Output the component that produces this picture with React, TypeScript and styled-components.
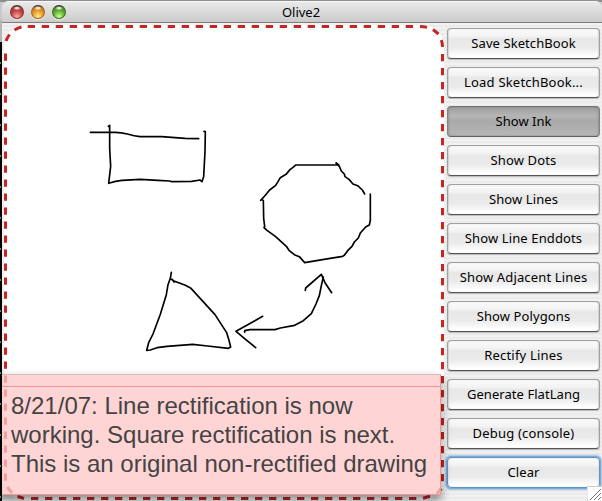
import React from "react";
import styled, { createGlobalStyle, css } from "styled-components";

const GlobalStyle = createGlobalStyle`
  html, body { margin: 0; padding: 0; overflow: hidden; background: #b4b4b4; }
  *, *::before, *::after { box-sizing: border-box; }
`;

const Desktop = styled.div`
  width: 602px;
  height: 501px;
  padding: 1px 0 0 2px;
  overflow: hidden;
  background:
    repeating-linear-gradient(180deg, transparent 0 13px, #5f9a62 13px 15px, transparent 15px 31px) 0 49px / 1px 460px no-repeat,
    linear-gradient(180deg, #8f8f8f 0 2px, #c9c9c9 2px 20px, #b5b5b5 20px 42px, #000 42px);
`;

const Window = styled.div`
  width: 600px;
  height: 500px;
  display: flex;
  flex-direction: column;
  border-radius: 7px 7px 0 0;
  overflow: hidden;
  background: repeating-linear-gradient(180deg, #ebebeb 0 2px, #f1f1f1 2px 4px);
`;

const TitleBar = styled.header`
  flex: none;
  height: 22px;
  display: grid;
  grid-template-columns: 75px 1fr 77px;
  align-items: center;
  border-top: 1px solid #f7f7f7;
  border-bottom: 1px solid #7e7e7e;
  background: linear-gradient(180deg, #e9e9e9, #cbcbcb);
`;

const Lights = styled.div`
  display: flex;
  gap: 7px;
  padding-left: 8px;
`;

const Light = styled.span<{ $edge: string; $mid: string; $glow: string }>`
  width: 14px;
  height: 14px;
  border-radius: 50%;
  border: 1px solid ${(p) => p.$edge};
  border-top-color: #3d3432;
  background:
    radial-gradient(ellipse 4px 2px at 50% 18%, #ffffffd0 0 30%, transparent 100%),
    radial-gradient(ellipse 8px 9px at 50% 90%, ${(p) => p.$glow} 0, ${(p) => p.$mid} 65%, ${(p) => p.$edge} 125%);
  box-shadow: 0 1px 1px #ffffffb0;
`;

const Title = styled.h1`
  margin: 0;
  text-align: center;
  font: 400 13px/18px "Noto Sans", sans-serif;
  color: #000;
`;

const Content = styled.div`
  flex: 1;
  min-height: 0;
  display: grid;
  grid-template-columns: 442px 158px;
`;

const SketchArea = styled.main`
  position: relative;
`;

const Drawing = styled.svg`
  display: block;
  width: 442px;
  height: 478px;
`;

const Note = styled.aside`
  position: absolute;
  left: 0;
  top: 351px;
  width: 439px;
  height: 121px;
  border: 1px solid #ec9999;
  border-left: 0;
  border-top-color: #d0bfbf;
  background: rgba(255, 198, 198, 0.76);
`;

const NoteShadow = styled.div`
  position: absolute;
  left: -4px;
  top: 351px;
  width: 443px;
  height: 121px;
  box-shadow: 0 5px 9px rgba(0, 0, 0, 0.48);
  clip-path: polygon(0 -10px, 460px -10px, 460px 140px, 0 140px, 0 121px, 443px 121px, 443px 0, 0 0);
`;

const NoteHandle = styled.div`
  height: 12px;
  border-bottom: 1px solid #ec9494;
`;

const NoteText = styled.p`
  margin: 4px 0 0 9px;
  font: 400 24px/29px "Liberation Sans", Arial, sans-serif;
  color: #444;
  white-space: pre;
`;

const NoteLine = styled.span`
  display: block;
`;

const Controls = styled.nav`
  display: flex;
  flex-direction: column;
  gap: 8px;
  padding: 5px 2px 0 3px;
`;

const pressed = css`
  background: linear-gradient(180deg, #9d9d9d 0, #b5b5b5 30%, #a9a9a9 50%, #b6b6b6 100%);
  border-color: #747474 #828282 #606060;
  box-shadow: inset 1px 0 2px #7777, inset -1px 0 2px #7777;
`;

const focused = css`
  border-color: #6792bd;
  box-shadow: 0 0 0 1px #7daad6, 0 0 2px 2px #9bbfe2, inset 0 0 1px #6b9dcc;
`;

const Button = styled.button<{ $state?: "pressed" | "focused"; $spacing: number }>`
  flex: none;
  width: 153px;
  height: 31px;
  margin: 0;
  padding: 0 0 2px;
  border: 1px solid #a0a0a0;
  border-bottom-color: #555;
  border-radius: 4px;
  background: linear-gradient(180deg, #fafafa 0, #f3f3f3 25%, #e7e7e7 34%, #ebebeb 65%, #ffffff 94%);
  box-shadow: 0 1px 1px #8888, inset 1px 0 1px #bbb8, inset -1px 0 1px #bbb8;
  font: 400 13px/18px "Noto Sans", sans-serif;
  letter-spacing: ${(p) => p.$spacing}px;
  color: #000;
  white-space: nowrap;
  ${(p) => p.$state === "pressed" && pressed}
  ${(p) => p.$state === "focused" && focused}
`;

const ResizeGrip = styled.svg`
  position: absolute;
  left: 587px;
  top: 486px;
  width: 15px;
  height: 15px;
`;

const actions: { label: string; spacing: number; state?: "pressed" | "focused" }[] = [
  { label: "Save SketchBook", spacing: 0.07 },
  { label: "Load SketchBook...", spacing: 0.2 },
  { label: "Show Ink", spacing: 0, state: "pressed" },
  { label: "Show Dots", spacing: 0.15 },
  { label: "Show Lines", spacing: 0.1 },
  { label: "Show Line Enddots", spacing: 0.12 },
  { label: "Show Adjacent Lines", spacing: 0.15 },
  { label: "Show Polygons", spacing: 0.1 },
  { label: "Rectify Lines", spacing: 0.2 },
  { label: "Generate FlatLang", spacing: 0.06 },
  { label: "Debug (console)", spacing: 0.2 },
  { label: "Clear", spacing: 0.1, state: "focused" },
];

function Sketch() {
  return (
    <Drawing viewBox="2 23 442 478" fill="none">
      <rect x="4" y="25" width="440" height="475" rx="21" fill="#fff" />
      <g stroke="#c52525" strokeWidth="3">
        <path d="M27.7 26.5H414" strokeDasharray="7.3 6.7" />
        <path d="M5.5 53.4V484" strokeDasharray="7.3 6.7" />
        <path d="M442.5 54V484" strokeDasharray="7.3 6.7" />
        <path d="M31 498.5H419" strokeDasharray="7.3 6.7" />
        <path d="M6 41Q7 38 9.5 34.5M14.5 30Q18 27.8 21.5 27M420 26.5Q424 26.5 427 27.4M433 29.5L438.5 34M441.3 40Q442.5 43 442.5 47M7.2 487L12 493M17.5 496.5L24 498.5M437 494L441 488.5M423 498.3L430 496.3" />
      </g>
      <g stroke="#000" strokeWidth="5" strokeLinecap="round" strokeLinejoin="round">
        <g transform="translate(80 115) scale(.33333)">
          <path d="M31 52H106Q124 53 142 57Q164 63 180 65H245L315 70L356 71" />
          <path d="M85 34L89 31V101L92 154L86 205Q107 198 126 196L181 193L234 196L269 198L275 200L335 199L360 195L366 200L371 185L375 110L376 50L372 49" />
        </g>
        <g transform="translate(250 150) scale(.33333)">
          <path d="M258 39L266 45H137L132 50L120 59L108 73L91 83L84 95L77 106L59 120L44 138L32 151L36 147L40 152L41 205L44 229L42 233L51 241L77 260L109 289L117 301L133 314L148 320L164 338L222 328L278 319L283 316L293 302L306 289L313 276L325 264L331 249L347 231L358 225L361 211V132" />
          <path d="M260 40L268 49L274 63L283 72L285 80L297 88L309 102L323 107L337 120L344 132" />
        </g>
        <g transform="translate(135 260) scale(.33333)">
          <path d="M109 37L106 55L99 74L94 104L76 163L54 222L41 248L35 271L46 270L66 263L96 259L173 253L218 258L280 265L287 261L282 241L275 218L240 164L168 85L151 76L117 63L106 56M112 58L117 66" />
        </g>
        <g transform="translate(225 260) scale(.33333)">
          <path d="M59 217V212L75 209H150L166 204L209 196L235 182L259 161L273 132L283 107L289 77L295 51" />
          <path d="M113 169L87 184L33 214L58 235L92 263" />
          <path d="M241 91L242 84L289 43L300 68L320 98" />
        </g>
      </g>
    </Drawing>
  );
}

export default function App() {
  return (
    <Desktop>
      <GlobalStyle />
      <Window>
        <TitleBar>
          <Lights>
            <Light $edge="#87302e" $mid="#cf4848" $glow="#ffb0aa" />
            <Light $edge="#a66420" $mid="#ef9e2c" $glow="#fff08d" />
            <Light $edge="#397024" $mid="#65b832" $glow="#d4ff95" />
          </Lights>
          <Title>Olive2</Title>
        </TitleBar>
        <Content>
          <SketchArea>
            <Sketch />
            <NoteShadow />
            <Note>
              <NoteHandle />
              <NoteText>
                <NoteLine>8/21/07: Line rectification is now</NoteLine>
                <NoteLine>working. Square rectification is next.</NoteLine>
                <NoteLine>This is an original non-rectified drawing</NoteLine>
              </NoteText>
            </Note>
          </SketchArea>
          <Controls>
            {actions.map((a) => (
              <Button key={a.label} type="button" $state={a.state} $spacing={a.spacing}>
                {a.label}
              </Button>
            ))}
          </Controls>
        </Content>
      </Window>
      <ResizeGrip viewBox="0 0 15 15">
        <rect width="15" height="15" fill="#fff" />
        <path d="M0 15V.5H15" fill="none" stroke="#ccc" />
        <path d="M3 14L14 3M7 14L14 7M11 14L14 11" stroke="#777" strokeWidth="1" />
      </ResizeGrip>
    </Desktop>
  );
}
